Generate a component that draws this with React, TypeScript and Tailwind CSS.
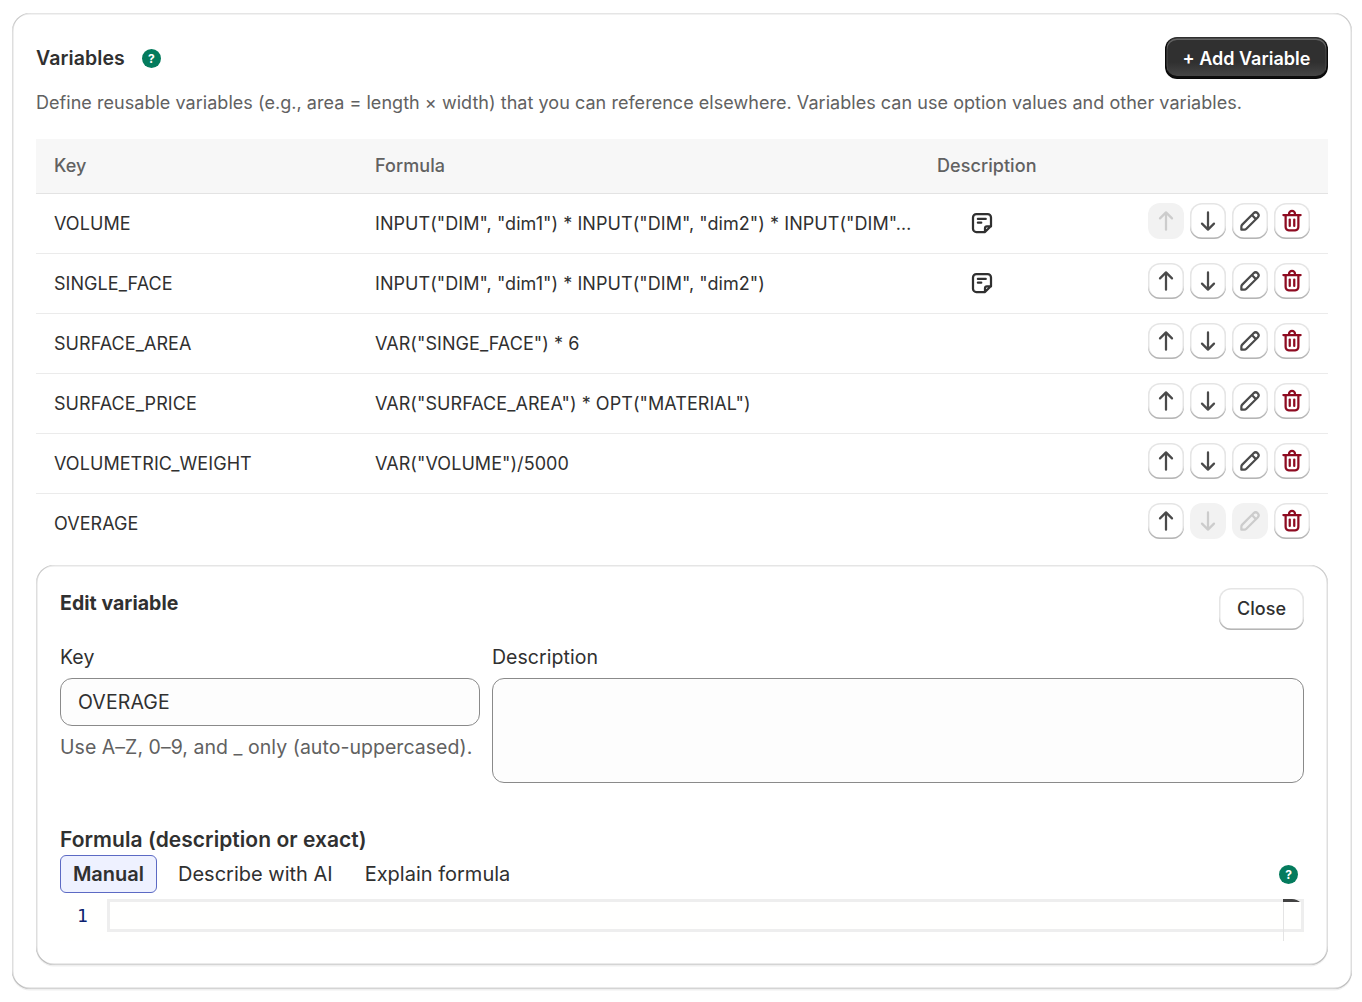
import type { ReactNode } from 'react';

const rows = [
  { key: 'VOLUME', formula: 'INPUT("DIM", "dim1") * INPUT("DIM", "dim2") * INPUT("DIM"…', note: true },
  { key: 'SINGLE_FACE', formula: 'INPUT("DIM", "dim1") * INPUT("DIM", "dim2")', note: true },
  { key: 'SURFACE_AREA', formula: 'VAR("SINGE_FACE") * 6' },
  { key: 'SURFACE_PRICE', formula: 'VAR("SURFACE_AREA") * OPT("MATERIAL")' },
  { key: 'VOLUMETRIC_WEIGHT', formula: 'VAR("VOLUME")/5000' },
  { key: 'OVERAGE', formula: '', editing: true },
];

const cardShadow =
  'shadow-[0_1.5px_0_0_rgba(26,26,26,0.07),inset_1.5px_0_0_0_rgba(0,0,0,0.13),inset_-1.5px_0_0_0_rgba(0,0,0,0.13),inset_0_-1.5px_0_0_rgba(0,0,0,0.17),inset_0_1.5px_0_0_rgba(204,204,204,0.5)]';
const buttonShadow =
  'shadow-[inset_0_-1.5px_0_0_#b5b5b5,inset_0_0_0_1.5px_rgba(0,0,0,0.1),inset_0_0.75px_0_2.25px_#fff]';

function Stroke({ children }: { children: ReactNode }) {
  return (
    <svg viewBox="0 0 20 20" className="size-[30px] shrink-0" fill="none" stroke="currentColor" strokeWidth={1.5} strokeLinecap="round" strokeLinejoin="round">
      {children}
    </svg>
  );
}

const UpIcon = () => <Stroke><path d="M10 15.75V4.25M6 8.25l4-4 4 4" /></Stroke>;
const DownIcon = () => <Stroke><path d="M10 4.25v11.5M6 11.75l4 4 4-4" /></Stroke>;

const EditIcon = () => (
  <svg viewBox="0 0 20 20" className="size-[30px] shrink-0" fill="currentColor" fillRule="evenodd">
    <path d="M15.655 4.344a2.695 2.695 0 0 0-3.81 0l-.599.599-.009-.009-1.06 1.06.008.01-5.88 5.88a2.75 2.75 0 0 0-.805 1.944v1.922a.75.75 0 0 0 .75.75h1.922a2.75 2.75 0 0 0 1.944-.806l7.54-7.539a2.695 2.695 0 0 0 0-3.81Zm-4.409 2.72-5.88 5.88a1.25 1.25 0 0 0-.366.884v1.172h1.172c.331 0 .65-.132.883-.366l5.88-5.88-1.689-1.69Zm2.75.629.599-.599a1.195 1.195 0 1 0-1.69-1.689l-.598.599 1.69 1.689Z" />
  </svg>
);

const TrashIcon = () => (
  <svg viewBox="0 0 20 20" className="size-[30px] shrink-0" fill="currentColor">
    <path d="M11.5 8.25a.75.75 0 0 1 .75.75v4.25a.75.75 0 0 1-1.5 0v-4.25a.75.75 0 0 1 .75-.75Z" />
    <path d="M9.25 9a.75.75 0 0 0-1.5 0v4.25a.75.75 0 0 0 1.5 0v-4.25Z" />
    <path
      fillRule="evenodd"
      d="M7.25 5.25a2.75 2.75 0 0 1 5.5 0h3a.75.75 0 0 1 0 1.5h-.75v5.45c0 1.68 0 2.52-.327 3.162a3 3 0 0 1-1.311 1.311c-.642.327-1.482.327-3.162.327h-.4c-1.68 0-2.52 0-3.162-.327a3 3 0 0 1-1.311-1.311c-.327-.642-.327-1.482-.327-3.162v-5.45h-.75a.75.75 0 0 1 0-1.5h3Zm1.5 0a1.25 1.25 0 1 1 2.5 0h-2.5Zm-2.25 1.5h7v5.45c0 .865-.001 1.423-.036 1.848-.033.408-.09.559-.128.633a1.5 1.5 0 0 1-.655.655c-.074.038-.225.095-.633.128-.425.035-.983.036-1.848.036h-.4c-.865 0-1.423-.001-1.848-.036-.408-.033-.559-.09-.633-.128a1.5 1.5 0 0 1-.656-.655c-.037-.074-.094-.225-.127-.633-.035-.425-.036-.983-.036-1.848v-5.45Z"
    />
  </svg>
);

const NoteIcon = () => (
  <Stroke>
    <path d="M12 16H6.25A2.25 2.25 0 0 1 4 13.75v-7.5A2.25 2.25 0 0 1 6.25 4h7.5A2.25 2.25 0 0 1 16 6.25V12l-4 4v-2.5a1.25 1.25 0 0 1 1.25-1.25H16M7.25 7.25h5.25M7.25 9.75H9.5" />
  </Stroke>
);

function HelpBadge() {
  return (
    <span className="flex size-[19px] items-center justify-center rounded-full bg-[#047b5d] pt-px text-[12px] leading-none font-bold text-white">
      ?
    </span>
  );
}

function IconButton({ children, disabled, danger }: { children: ReactNode; disabled?: boolean; danger?: boolean }) {
  const tone = disabled
    ? 'bg-[#f2f2f2] text-[#cccccc]'
    : `bg-white ${buttonShadow} ${danger ? 'text-[#8e0b21]' : 'text-[#4a4a4a]'}`;
  return (
    <button disabled={disabled} className={`flex size-9 items-center justify-center rounded-[12px] ${tone}`}>
      {children}
    </button>
  );
}

function VariableTable() {
  return (
    <div className="mt-[21px] text-[18px] leading-[30px] tracking-[0.06px] text-[#303030]">
      <div className="grid h-[55px] grid-cols-[321px_562px_1fr] items-center border-b border-[#e3e3e3] bg-[#f7f7f7] font-medium text-[#616161]">
        <div className="pl-[18px]">Key</div>
        <div className="pl-[18px]">Formula</div>
        <div className="pl-[18px]">Description</div>
      </div>
      {rows.map((row, i) => (
        <div
          key={row.key}
          className={`grid grid-cols-[321px_562px_1fr_auto] items-center ${i < rows.length - 1 ? 'h-[60px] border-b border-[#ebebeb]' : 'h-[59px]'}`}
        >
          <div className="pl-[18px]">{row.key}</div>
          <div className="truncate pl-[18px]">{row.formula}</div>
          <div className="pb-0.5 pl-12">{row.note && <NoteIcon />}</div>
          <div className="flex gap-1.5 pr-[18px] pb-[5px]">
            <IconButton disabled={i === 0}><UpIcon /></IconButton>
            <IconButton disabled={i === rows.length - 1}><DownIcon /></IconButton>
            <IconButton disabled={row.editing}><EditIcon /></IconButton>
            <IconButton danger><TrashIcon /></IconButton>
          </div>
        </div>
      ))}
    </div>
  );
}

function EditPanel() {
  return (
    <section className={`mt-3 h-[400px] rounded-[18px] bg-white p-6 pt-[23px] text-[19.5px] leading-[30px] tracking-[0.04px] ${cardShadow}`}>
      <div className="flex items-start justify-between">
        <h3 className="font-[650]">Edit variable</h3>
        <button className={`h-[42px] w-[85px] rounded-[12px] bg-white text-center text-[18px] font-medium ${buttonShadow}`}>Close</button>
      </div>

      <div className="mt-3 grid grid-cols-[420px_1fr] gap-3">
        <label className="block">
          Key
          <input defaultValue="OVERAGE" className="mt-1.5 block h-12 w-full rounded-[12px] border border-[#8a8a8a] bg-[#fdfdfd] px-[17px] tracking-[0.1px] outline-none" />
          <span className="mt-1.5 block whitespace-nowrap text-[#616161]">Use A–Z, 0–9, and _ only (auto-uppercased).</span>
        </label>
        <label className="block">
          Description
          <textarea className="mt-1.5 block h-[105px] w-full resize-none rounded-[12px] border border-[#8a8a8a] bg-[#fdfdfd] px-[17px] outline-none" />
        </label>
      </div>

      <h4 className="mt-[42px] text-[21px] font-semibold">Formula (description or exact)</h4>
      <div className="flex h-[38px] items-center text-[20px] tracking-normal">
        <button className="h-[38px] w-[97px] rounded-[6px] border border-[#5c6ac4] bg-[#eef1ff] font-semibold">Manual</button>
        <button className="ml-[21px]">Describe with AI</button>
        <button className="ml-[32px]">Explain formula</button>
        <span className="mt-px mr-1.5 ml-auto"><HelpBadge /></span>
      </div>

      <div className="mt-1.5 flex h-[42px] bg-[#fffffe]">
        <div className="w-[47px] pr-[19px] text-right font-['DejaVu_Sans_Mono',monospace] text-[18px] leading-[34px] text-[#0b216f]">1</div>
        <div className="relative h-[33px] flex-1 border-[3px] border-[#eeeeee]">
          {/* overview ruler at the right edge of the editor */}
          <div className="absolute -top-[3px] -right-[3px] h-[42px] w-[21px] overflow-hidden rounded-tr-[12px]">
            <div className="h-[3px] bg-[#424242]" />
            <div className="h-full border-l border-[#e4e4e4]" />
          </div>
        </div>
      </div>
    </section>
  );
}

export default function App() {
  return (
    <div className="h-[1002px] bg-white pt-[13px] pr-[10px] pl-3 font-['Inter',sans-serif] text-[#303030]">
      <main className={`h-[976px] rounded-[18px] bg-white p-6 ${cardShadow}`}>
        <header className="flex h-[42px] items-center justify-between">
          <div className="flex items-center gap-[17px]">
            <h2 className="text-[19.5px] leading-[30px] font-semibold tracking-[0.1px]">Variables</h2>
            <HelpBadge />
          </div>
          <button className="h-[42px] w-[163px] rounded-[12px] bg-[#303030] bg-linear-to-b from-[#303030] from-60% to-[#4a4a4a] text-center text-[18px] font-semibold whitespace-nowrap text-white shadow-[inset_0_-1.5px_0_1.5px_rgba(0,0,0,0.8),inset_0_0_0_1.5px_#303030,inset_0_0.75px_0_2.25px_rgba(255,255,255,0.25)]">
            + Add Variable
          </button>
        </header>
        <p className="mt-[9px] text-[18px] leading-[30px] tracking-[0.04px] whitespace-nowrap text-[#616161]">
          Define reusable variables (e.g., area = length × width) that you can reference elsewhere. Variables can use option values and other variables.
        </p>
        <VariableTable />
        <EditPanel />
      </main>
    </div>
  );
}
